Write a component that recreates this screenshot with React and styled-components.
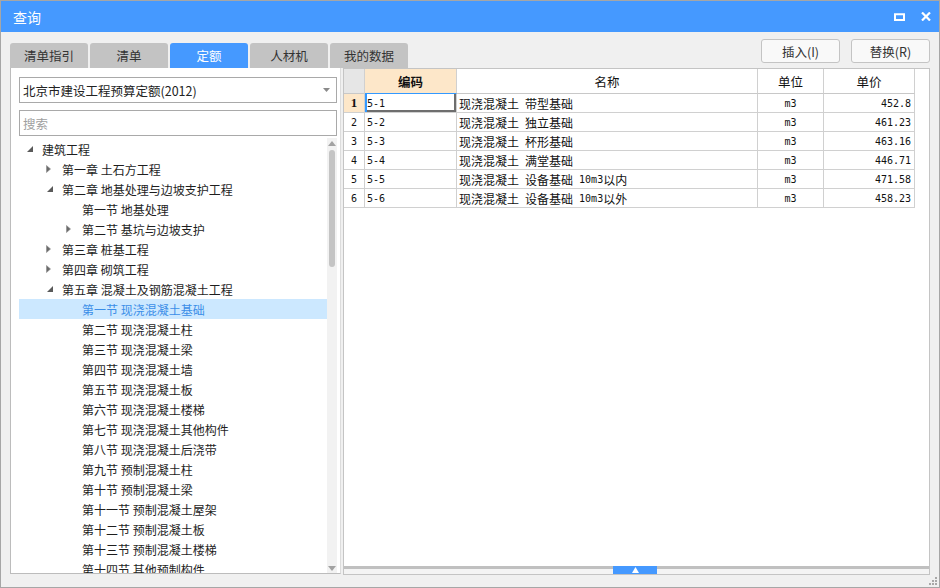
import React from "react";
import styled, { createGlobalStyle } from "styled-components";

const GlobalStyle = createGlobalStyle`
  html, body { margin: 0; padding: 0; width: 940px; height: 588px; overflow: hidden; background: #f0f0f0; }
  body { font-family: "Noto Sans CJK SC", "Noto Sans", sans-serif; font-size: 12px; color: #222; }
  * { box-sizing: border-box; }
`;

const Window = styled.div`
  width: 940px;
  height: 588px;
  border: 1px solid #a6a6a6;
  background: #f0f0f0;
  display: flex;
  flex-direction: column;
`;

const TitleBar = styled.div`
  height: 31px;
  flex: none;
  background: #4599ff;
  display: flex;
  align-items: center;
  padding: 0 8px 0 12px;
  color: #fff;
`;

const Title = styled.div`
  flex: 1;
  font-size: 14px;
  line-height: 1;
  padding-top: 1px;
`;

const TitleButton = styled.div`
  width: 11px;
  height: 10px;
  margin-left: 15px;
  display: flex;
  align-items: center;
  justify-content: center;
`;

const TopRow = styled.div`
  height: 36px;
  flex: none;
  display: flex;
  align-items: flex-start;
  padding: 0 9px;
`;

const Tabs = styled.div`
  display: flex;
  gap: 2px;
  margin-top: 11px;
`;

const Tab = styled.div`
  width: 78px;
  height: 25px;
  border-radius: 3px 3px 0 0;
  background: ${(p) => (p.$active ? "#4599ff" : "#c3c3c3")};
  color: ${(p) => (p.$active ? "#fff" : "#333")};
  font-size: 12.5px;
  display: flex;
  align-items: center;
  justify-content: center;
`;

const Buttons = styled.div`
  margin-left: auto;
  margin-top: 7px;
  display: flex;
  gap: 11px;
`;

const Button = styled.div`
  width: 79px;
  height: 24px;
  border: 1px solid #c4c4c4;
  border-radius: 3px;
  background: #f9f9f9;
  color: #333;
  font-size: 12.5px;
  display: flex;
  align-items: center;
  justify-content: center;
`;

const Main = styled.div`
  flex: 1;
  display: flex;
  gap: 2px;
  padding: 0 9px;
  min-height: 0;
`;

const LeftPanel = styled.div`
  width: 331px;
  height: 506px;
  flex: none;
  background: #fff;
  border: 1px solid #bcbcbc;
  border-top: none;
  border-right-color: #dcdcdc;
  padding: 9px 3px 0 8px;
  display: flex;
  flex-direction: column;
`;

const Select = styled.div`
  height: 26px;
  flex: none;
  border: 1px solid #a9a9a9;
  display: flex;
  align-items: center;
  padding: 0 6px 0 3px;
  font-size: 12.5px;
  color: #222;
  justify-content: space-between;
`;

const Search = styled.div`
  height: 26px;
  flex: none;
  margin-top: 7px;
  border: 1px solid #a9a9a9;
  display: flex;
  align-items: center;
  padding-left: 3px;
  font-size: 12.5px;
  color: #a0a0a0;
`;

const Tree = styled.div`
  flex: 1;
  margin-top: 2px;
  display: flex;
  min-height: 0;
`;

const TreeList = styled.div`
  flex: 1;
  overflow: hidden;
  padding-top: 1px;
`;

const TreeRow = styled.div`
  height: 20px;
  display: flex;
  align-items: center;
  padding-left: ${(p) => 7 + p.$level * 20}px;
  background: ${(p) => (p.$selected ? "#cce8ff" : "transparent")};
  color: ${(p) => (p.$selected ? "#3b8ee8" : "#1e1e1e")};
  white-space: nowrap;
  font-size: 12px;
`;

const ArrowBox = styled.div`
  width: 16px;
  flex: none;
  display: flex;
  align-items: center;
  padding-left: ${(p) => (p.$open ? 1 : 0)}px;
`;

const ScrollBar = styled.div`
  width: 10px;
  flex: none;
  background: #f2f2f2;
  display: flex;
  flex-direction: column;
  align-items: center;
`;

const ScrollArrow = styled.div`
  height: 10px;
  flex: none;
  display: flex;
  align-items: center;
  justify-content: center;
`;

const ScrollThumb = styled.div`
  width: 6px;
  height: 117px;
  margin-top: 2px;
  border-radius: 3px;
  background: #c4c4c4;
`;

const ScrollSpacer = styled.div`
  flex: 1;
`;

const RightPanel = styled.div`
  width: 587px;
  flex: none;
  background: #fff;
  border: 1px solid #c4c4c4;
  display: flex;
  flex-direction: column;
`;

const Grid = styled.div`
  display: flex;
  flex-direction: column;
`;

const GridRow = styled.div`
  display: grid;
  grid-template-columns: 21px 92px 301px 66px 91px;
  height: ${(p) => (p.$header ? 25 : 19)}px;
`;

const Cell = styled.div`
  border-right: 1px solid #d0d0d0;
  border-bottom: 1px solid ${(p) => (p.$header ? "#c8c8c8" : "#d0d0d0")};
  background: ${(p) => p.$bg || "#fff"};
  display: flex;
  align-items: center;
  justify-content: ${(p) => p.$align || "flex-start"};
  padding: 0 ${(p) => (p.$align === "flex-end" ? 3 : 2)}px;
  font-size: ${(p) => (p.$header ? 12.5 : 12)}px;
  font-weight: ${(p) => (p.$bold ? 700 : 400)};
  color: #111;
  white-space: pre;
  overflow: hidden;
  box-shadow: ${(p) =>
    p.$focus ? "inset 2px 0 0 #3399ff, inset -2px -2px 0 #6e6e6e" : "none"};
  ${(p) => (p.$focusTop ? "border-bottom-color: #3399ff;" : "")}
`;

const Mono = styled.span`
  font-family: "DejaVu Sans Mono", "Liberation Mono", monospace;
  font-size: 10px;
  white-space: pre;
`;

const RowNum = styled.span`
  font-family: ${(p) => (p.$bold ? '"Liberation Serif", serif' : '"DejaVu Sans Mono", monospace')};
  font-size: ${(p) => (p.$bold ? 13 : 10)}px;
  font-weight: ${(p) => (p.$bold ? 700 : 400)};
`;

const GridSpacer = styled.div`
  flex: 1;
`;

const Splitter = styled.div`
  position: relative;
  height: 8px;
  flex: none;
  border-top: 3px solid #c0c0c0;
  background: #f4f4f4;
`;

const SplitHandle = styled.div`
  position: absolute;
  left: 269px;
  top: -3px;
  width: 44px;
  height: 8px;
  background: #4599ff;
  display: flex;
  align-items: center;
  justify-content: center;
`;

const Footer = styled.div`
  height: 12px;
  flex: none;
  display: flex;
  justify-content: flex-end;
  align-items: flex-end;
  padding: 0 1px 1px 0;
`;

const tree = [
  { level: 0, text: "建筑工程", state: "open" },
  { level: 1, text: "第一章 土石方工程", state: "closed" },
  { level: 1, text: "第二章 地基处理与边坡支护工程", state: "open" },
  { level: 2, text: "第一节 地基处理" },
  { level: 2, text: "第二节 基坑与边坡支护", state: "closed" },
  { level: 1, text: "第三章 桩基工程", state: "closed" },
  { level: 1, text: "第四章 砌筑工程", state: "closed" },
  { level: 1, text: "第五章 混凝土及钢筋混凝土工程", state: "open" },
  { level: 2, text: "第一节 现浇混凝土基础", selected: true },
  { level: 2, text: "第二节 现浇混凝土柱" },
  { level: 2, text: "第三节 现浇混凝土梁" },
  { level: 2, text: "第四节 现浇混凝土墙" },
  { level: 2, text: "第五节 现浇混凝土板" },
  { level: 2, text: "第六节 现浇混凝土楼梯" },
  { level: 2, text: "第七节 现浇混凝土其他构件" },
  { level: 2, text: "第八节 现浇混凝土后浇带" },
  { level: 2, text: "第九节 预制混凝土柱" },
  { level: 2, text: "第十节 预制混凝土梁" },
  { level: 2, text: "第十一节 预制混凝土屋架" },
  { level: 2, text: "第十二节 预制混凝土板" },
  { level: 2, text: "第十三节 预制混凝土楼梯" },
  { level: 2, text: "第十四节 其他预制构件" },
];

const rows = [
  ["5-1", "现浇混凝土 带型基础", "m3", "452.8"],
  ["5-2", "现浇混凝土 独立基础", "m3", "461.23"],
  ["5-3", "现浇混凝土 杯形基础", "m3", "463.16"],
  ["5-4", "现浇混凝土 满堂基础", "m3", "446.71"],
  ["5-5", "现浇混凝土 设备基础 10m3以内", "m3", "471.58"],
  ["5-6", "现浇混凝土 设备基础 10m3以外", "m3", "458.23"],
];

const mixed = (s) =>
  s
    .split(/([\x00-\x7f]+)/)
    .filter(Boolean)
    .map((p, i) =>
      /^[\x00-\x7f]+$/.test(p) ? <Mono key={i}>{p}</Mono> : <span key={i}>{p}</span>
    );

const Arrow = ({ state }) => {
  if (state === "open")
    return (
      <svg width="6" height="6" viewBox="0 0 6 6">
        <polygon points="6,0 6,6 0,6" fill="#5a5a5a" />
      </svg>
    );
  if (state === "closed")
    return (
      <svg width="5" height="8" viewBox="0 0 5 8">
        <polygon points="0.5,0.5 4.5,4 0.5,7.5" fill="#6a6a6a" stroke="#8a8a8a" strokeWidth="0.6" />
      </svg>
    );
  return null;
};

export default function App() {
  return (
    <>
      <GlobalStyle />
      <Window>
        <TitleBar>
          <Title>查询</Title>
          <TitleButton>
            <svg width="11" height="8" viewBox="0 0 11 8">
              <rect x="1" y="1.25" width="9" height="5.75" fill="none" stroke="#fff" strokeWidth="2" />
            </svg>
          </TitleButton>
          <TitleButton>
            <svg width="10" height="9" viewBox="0 0 10 9">
              <path d="M1 0.5 L9 8.5 M9 0.5 L1 8.5" stroke="#fff" strokeWidth="2.2" />
            </svg>
          </TitleButton>
        </TitleBar>

        <TopRow>
          <Tabs>
            <Tab>清单指引</Tab>
            <Tab>清单</Tab>
            <Tab $active>定额</Tab>
            <Tab>人材机</Tab>
            <Tab>我的数据</Tab>
          </Tabs>
          <Buttons>
            <Button>插入(I)</Button>
            <Button>替换(R)</Button>
          </Buttons>
        </TopRow>

        <Main>
          <LeftPanel>
            <Select>
              <span>北京市建设工程预算定额(2012)</span>
              <svg width="7" height="4" viewBox="0 0 7 4">
                <polygon points="0,0 7,0 3.5,4" fill="#8a8a8a" />
              </svg>
            </Select>
            <Search>搜索</Search>
            <Tree>
              <TreeList>
                {tree.map((t, i) => (
                  <TreeRow key={i} $level={t.level} $selected={t.selected}>
                    <ArrowBox $open={t.state === "open"}>
                      <Arrow state={t.state} />
                    </ArrowBox>
                    {t.text}
                  </TreeRow>
                ))}
              </TreeList>
              <ScrollBar>
                <ScrollArrow>
                  <svg width="8" height="5" viewBox="0 0 8 5">
                    <polygon points="4,0 8,5 0,5" fill="#a2a2a2" />
                  </svg>
                </ScrollArrow>
                <ScrollThumb />
                <ScrollSpacer />
                <ScrollArrow>
                  <svg width="8" height="5" viewBox="0 0 8 5">
                    <polygon points="0,0 8,0 4,5" fill="#a2a2a2" />
                  </svg>
                </ScrollArrow>
              </ScrollBar>
            </Tree>
          </LeftPanel>

          <RightPanel>
            <Grid>
              <GridRow $header>
                <Cell $header $bg="#e6e6e6" />
                <Cell $header $bg="#fde7c9" $align="center" $bold $focusTop>
                  编码
                </Cell>
                <Cell $header $align="center">名称</Cell>
                <Cell $header $align="center">单位</Cell>
                <Cell $header $align="center">单价</Cell>
              </GridRow>
              {rows.map((r, i) => (
                <GridRow key={i}>
                  <Cell $align="center" $bg={i === 0 ? "#fde7c9" : "#fff"}>
                    <RowNum $bold={i === 0}>{i + 1}</RowNum>
                  </Cell>
                  <Cell $focus={i === 0}>
                    <Mono>{r[0]}</Mono>
                  </Cell>
                  <Cell>{mixed(r[1])}</Cell>
                  <Cell $align="center">
                    <Mono>{r[2]}</Mono>
                  </Cell>
                  <Cell $align="flex-end">
                    <Mono>{r[3]}</Mono>
                  </Cell>
                </GridRow>
              ))}
            </Grid>
            <GridSpacer />
            <Splitter>
              <SplitHandle>
                <svg width="7" height="6" viewBox="0 0 7 6">
                  <polygon points="3.5,0 7,6 0,6" fill="#fff" />
                </svg>
              </SplitHandle>
            </Splitter>
          </RightPanel>
        </Main>

        <Footer>
          <svg width="10" height="10" viewBox="0 0 10 10">
            <rect x="7" y="1" width="2" height="2" fill="#a8a8a8" />
            <rect x="4" y="4" width="2" height="2" fill="#a8a8a8" />
            <rect x="7" y="4" width="2" height="2" fill="#a8a8a8" />
            <rect x="1" y="7" width="2" height="2" fill="#a8a8a8" />
            <rect x="4" y="7" width="2" height="2" fill="#a8a8a8" />
            <rect x="7" y="7" width="2" height="2" fill="#a8a8a8" />
          </svg>
        </Footer>
      </Window>
    </>
  );
}
